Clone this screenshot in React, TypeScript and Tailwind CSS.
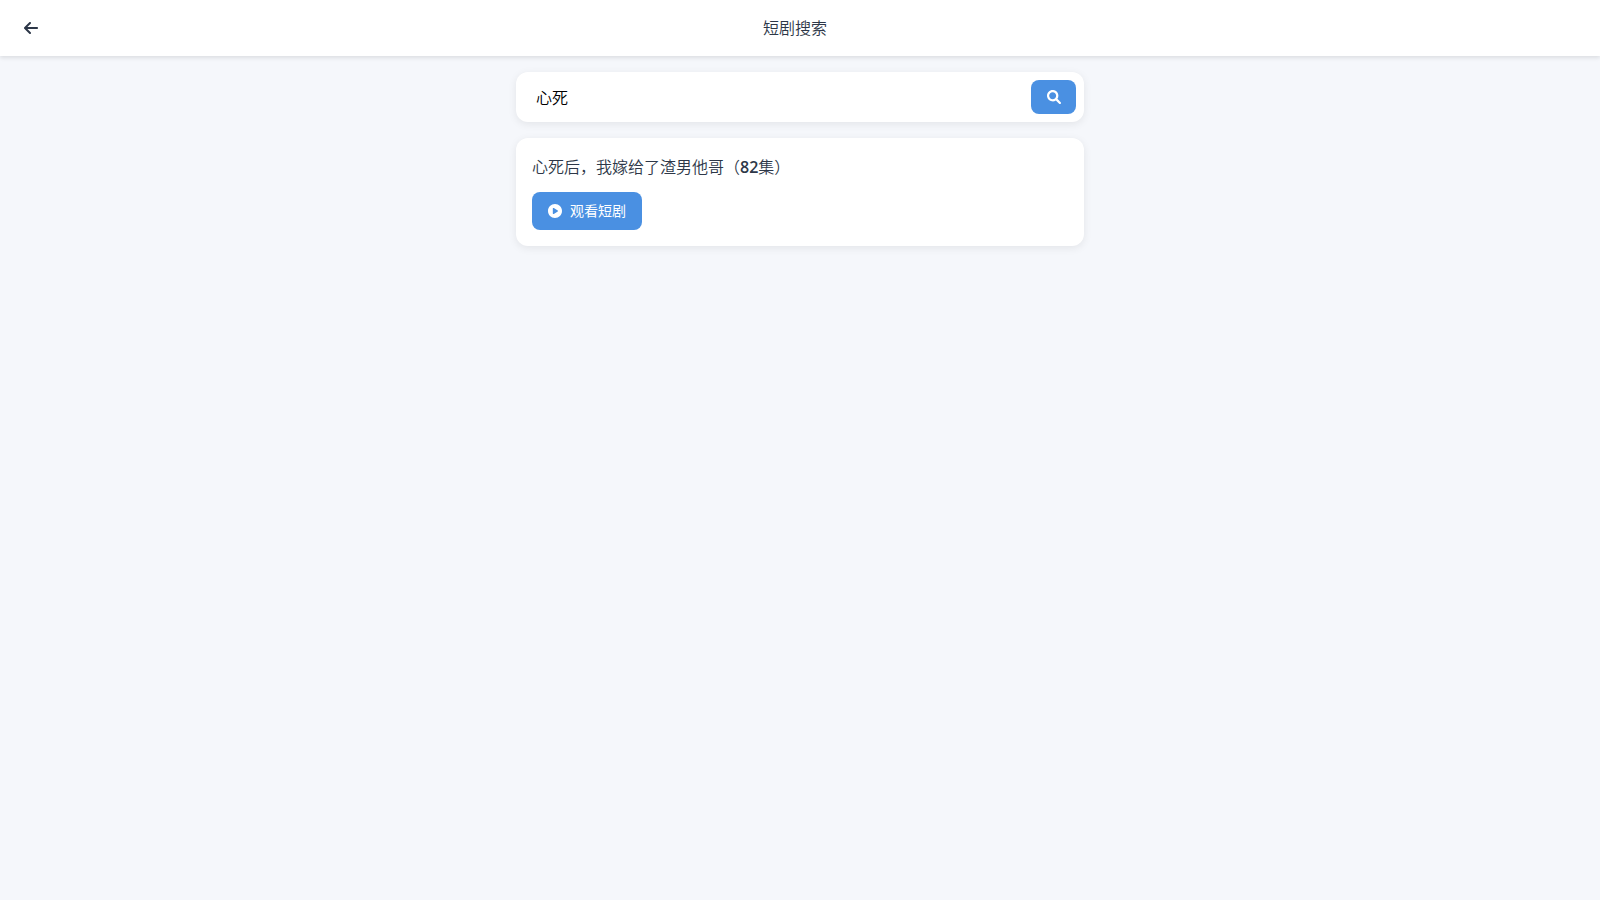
import React, { useState } from 'react';
import { FaArrowLeft } from 'react-icons/fa6';

const dramas = [{ id: 1, title: '心死后，我嫁给了渣男他哥', episodes: 82 }];

const SearchIcon = () => (
  <svg viewBox="0 0 512 512" fill="currentColor" aria-hidden="true" className="h-[14px] w-[14px]">
    <path d="M500.3 443.7l-119.7-119.7c27.22-40.41 40.65-90.9 33.46-144.7C401.8 87.79 326.8 13.32 235.2 1.723C99.01-15.51-15.51 99.01 1.724 235.2c11.6 91.64 86.08 166.7 177.6 178.9c53.8 7.189 104.3-6.236 144.7-33.46l119.7 119.7c15.62 15.62 40.95 15.62 56.57 0C515.9 484.7 515.9 459.3 500.3 443.7zM79.1 208c0-70.58 57.42-128 128-128s128 57.42 128 128c0 70.58-57.42 128-128 128S79.1 278.6 79.1 208z" />
  </svg>
);

const PlayIcon = () => (
  <svg viewBox="0 0 512 512" fill="currentColor" aria-hidden="true" className="h-[14px] w-[14px]">
    <path d="M512 256C512 397.4 397.4 512 256 512C114.6 512 0 397.4 0 256C0 114.6 114.6 0 256 0C397.4 0 512 114.6 512 256zM176 168V344C176 352.7 180.7 360.7 188.3 364.9C195.8 369.2 205.1 369 212.5 364.5L356.5 276.5C363.6 272.1 368 264.4 368 256C368 247.7 363.6 239.9 356.5 235.5L212.5 147.5C205.1 142.1 195.8 142.8 188.3 147.1C180.7 151.3 176 159.3 176 168V168z" />
  </svg>
);

const Header = () => (
  <header className="flex h-14 items-center bg-white px-4 shadow-[0_2px_4px_rgba(0,0,0,0.1)]">
    <button type="button" aria-label="返回" className="p-2 text-[#2d3748]">
      <FaArrowLeft className="h-4 w-[14px]" />
    </button>
    <h1 className="flex-1 text-center text-base font-[350] text-[#2d3748]">短剧搜索</h1>
    <div className="w-10" />
  </header>
);

const SearchBox = () => {
  const [keyword, setKeyword] = useState('心死');

  return (
    <form
      onSubmit={(e) => e.preventDefault()}
      className="flex items-center rounded-xl bg-white p-2 shadow-[0_2px_8px_rgba(0,0,0,0.08)]"
    >
      <input
        type="text"
        aria-label="搜索短剧"
        value={keyword}
        onChange={(e) => setKeyword(e.target.value)}
        className="h-[34px] min-w-0 flex-1 px-3 text-base font-[350] text-black outline-none"
      />
      <button
        type="submit"
        aria-label="搜索"
        className="flex h-[34px] w-[45px] items-center justify-center rounded-lg bg-[#4a90e2] text-white"
      >
        <SearchIcon />
      </button>
    </form>
  );
};

const DramaCard = ({ title, episodes }: { title: string; episodes: number }) => (
  <div className="rounded-xl bg-white p-4 shadow-[0_2px_8px_rgba(0,0,0,0.08)]">
    <h2 className="mb-3 text-base leading-[26px] font-[350] text-[#2d3748]">
      {title}（<span className="font-semibold">{episodes}</span>集）
    </h2>
    <button
      type="button"
      className="flex h-[38px] items-center gap-2 rounded-lg bg-[#4a90e2] px-4 text-sm text-white"
    >
      <PlayIcon />
      观看短剧
    </button>
  </div>
);

const App = () => (
  <div
    lang="zh-CN"
    className="min-h-screen bg-[#f5f7fb] font-['Open_Sans','Noto_Sans_CJK_SC',sans-serif]"
  >
    <Header />
    <main className="mx-auto flex max-w-[600px] flex-col gap-4 p-4">
      <SearchBox />
      {dramas.map((drama) => (
        <DramaCard key={drama.id} title={drama.title} episodes={drama.episodes} />
      ))}
    </main>
  </div>
);

export default App;
